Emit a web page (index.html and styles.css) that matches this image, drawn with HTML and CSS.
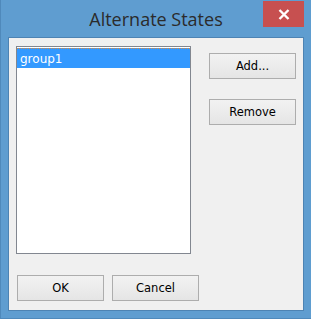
FILE: index.html
```html
<!DOCTYPE html>
<html lang="en">
<head>
    <meta charset="UTF-8">
    <title>Alternate States</title>
    <link rel="stylesheet" href="styles.css">
</head>
<body>
    <div class="window">
        <div class="titlebar">
            <span class="title">Alternate States</span>
            <div class="close-btn">
                <svg width="12" height="11" viewBox="0 0 12 11">
                    <path d="M1.5 1 L10.5 10 M10.5 1 L1.5 10" stroke="#fff" stroke-width="2.4" fill="none"/>
                </svg>
            </div>
        </div>

        <div class="client">
            <div class="main-row">
                <div class="listbox">
                    <div class="list-item selected">group1</div>
                </div>
                <div class="side-buttons">
                    <button class="btn">Add...</button>
                    <button class="btn">Remove</button>
                </div>
            </div>
            <div class="bottom-row">
                <button class="btn">OK</button>
                <button class="btn">Cancel</button>
            </div>
        </div>
    </div>
</body>
</html>
```

FILE: styles.css
```css
body {
    margin: 0;
    font-family: Tahoma, "DejaVu Sans", sans-serif;
}
.window {
    position: relative;
    width: 311px;
    height: 319px;
    box-sizing: border-box;
    background-color: #5f9dd0;
    border-left: 1px solid #4f89bb;
    border-bottom: 1px solid #4f89bb;
}
.titlebar {
    height: 37px;
    display: flex;
    justify-content: center;
    align-items: flex-start;
}
.title {
    font-family: "Open Sans", "Noto Sans", sans-serif;
    font-size: 18px;
    color: #2b2b2b;
    margin-top: 7px;
}
.close-btn {
    position: absolute;
    top: 1px;
    left: 262px;
    width: 41px;
    height: 26px;
    background-color: #c75050;
    display: flex;
    justify-content: center;
    align-items: center;
}
.client {
    margin-left: 7px;
    width: 296px;
    height: 274px;
    box-sizing: border-box;
    background-color: #f0f0f0;
    border: 1px solid #4d83b3;
    padding: 8px 7px;
}
.main-row {
    display: flex;
    gap: 18px;
}
.listbox {
    width: 176px;
    height: 208px;
    box-sizing: border-box;
    background-color: #fff;
    border: 1px solid #828790;
    padding: 1px 0 0 0;
}
.list-item {
    height: 19px;
    line-height: 20px;
    padding-left: 3px;
    font-family: "DejaVu Sans", sans-serif;
    font-size: 12px;
}
.list-item.selected {
    background-color: #3399ff;
    color: #fff;
    border-top: 1px dotted #e08a3c;
}
.side-buttons {
    display: flex;
    flex-direction: column;
    gap: 20px;
    padding-top: 7px;
}
.btn {
    width: 87px;
    height: 26px;
    box-sizing: border-box;
    border: 1px solid #adadad;
    background: linear-gradient(#f2f2f2, #e5e5e5);
    font-family: "DejaVu Sans", sans-serif;
    font-size: 11.5px;
    color: #000;
    padding: 0;
}
.bottom-row {
    display: flex;
    gap: 8px;
    margin-top: 21px;
    padding-left: 1px;
}
```
